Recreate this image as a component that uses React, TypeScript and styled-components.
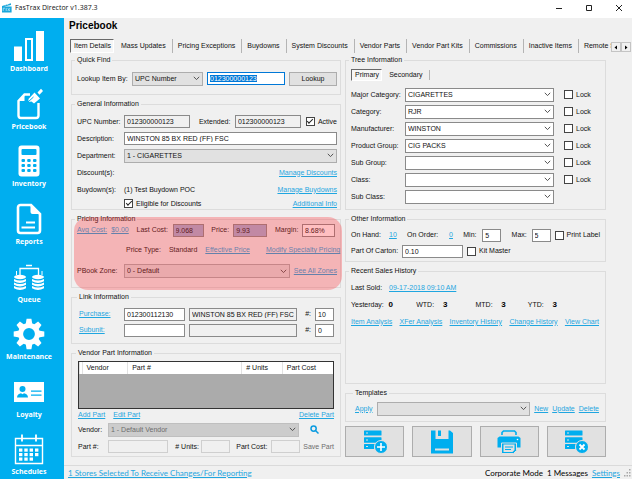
import React, { useEffect, useRef } from "react";
import styled, { createGlobalStyle, css } from "styled-components";

const BLUE = "#00aeef";

const Global = createGlobalStyle`
  *, *::before, *::after { box-sizing: border-box; }
  html, body { margin: 0; padding: 0; }
  body {
    background: #f0f0f0;
    color: #111;
    font: 7px/10px "Liberation Sans", Arial, sans-serif;
  }
  button, input, select { font: inherit; color: inherit; margin: 0; }
`;

const Window = styled.div`
  min-height: 100vh;
  display: flex;
  flex-direction: column;
`;

const TitleBar = styled.header`
  height: 18px;
  flex: none;
  display: flex;
  align-items: center;
  gap: 3px;
  padding: 0 0 2px 2px;
  background: #fff;
  font-family: "Open Sans", "Noto Sans", sans-serif;
`;

const Caption = styled.span`
  flex: 1;
`;

const WindowButton = styled.button`
  width: 27px;
  height: 14px;
  display: grid;
  place-items: center;
  padding: 0;
  border: 0;
  background: none;
`;

const Body = styled.div`
  flex: 1;
  display: flex;
`;

const Sidebar = styled.nav`
  width: 64px;
  flex: none;
  display: flex;
  flex-direction: column;
  background: ${BLUE};
`;

const NavItem = styled.button`
  flex: 1;
  display: flex;
  flex-direction: column;
  align-items: center;
  padding: 12px 6px 0 0;
  border: 0;
  background: none;
  color: #fff;
  font: 700 7px/13px "Open Sans", "Noto Sans", sans-serif;
  svg { display: block; }
`;

const Page = styled.div`
  flex: 1;
  min-width: 0;
  display: flex;
  flex-direction: column;
`;

const PageTitle = styled.h1`
  margin: 0 0 5px;
  padding-left: 5px;
  color: #000;
  font: 700 10px/16px "Liberation Sans", Arial, sans-serif;
`;

const TabStrip = styled.div`
  display: flex;
  align-items: stretch;
  height: 14px;
  margin: 0 0 2px 6px;
  overflow: hidden;
`;

const Tab = styled.button<{ $active?: boolean }>`
  flex: none;
  padding: 0 6px 0 5px;
  border: 0;
  border-right: 1px solid #b4b4b4;
  background: none;
  white-space: nowrap;
  ${(p) =>
    p.$active &&
    css`
      padding: 0 2px 0 3px;
      margin-right: 2px;
      border: 1px solid #fff;
      border-top-color: #696969;
      border-left-color: #696969;
      background: #f6f6f6;
      & + * { border-left: 1px solid #b4b4b4; }
    `}
`;

const TabScroller = styled.div`
  display: flex;
  margin-left: auto;
  padding: 3px 1px 1px 0;
  background: #f0f0f0;
`;

const TabViewport = styled.div`
  flex: 1;
  min-width: 0;
  display: flex;
  overflow: hidden;
  & > :last-child { border-right: 0; padding-right: 0; }
`;

const ScrollButton = styled.button`
  width: 10px;
  padding: 0;
  display: grid;
  place-items: center;
  border: 1px solid #c4c4c4;
  background: #f0f0f0;
`;

const Columns = styled.main`
  flex: 1;
  display: grid;
  grid-template-columns: minmax(0, 270fr) minmax(0, 261fr);
  gap: 4px;
  padding: 0 26px 8px 7px;
`;

const Column = styled.div`
  display: flex;
  flex-direction: column;
  gap: 4px;
`;

const Group = styled.fieldset<{ $pad: string; $grow?: boolean }>`
  position: relative;
  min-width: 0;
  margin: 0;
  padding: ${(p) => p.$pad};
  border: 1px solid #dcdcdc;
  ${(p) => p.$grow && "flex: 1;"}
`;

const Legend = styled.legend`
  margin-left: -2px;
  padding: 0 2px;
  line-height: 10px;
`;

const Highlight = styled.div`
  position: absolute;
  inset: -7px -2px -3px 2px;
  border-radius: 14px;
  background: rgba(255, 50, 55, 0.31);
  pointer-events: none;
`;

const Row = styled.div<{ $h?: number; $gap?: number; $between?: boolean }>`
  display: flex;
  align-items: center;
  height: ${(p) => p.$h ?? 17}px;
  gap: ${(p) => p.$gap ?? 4}px;
  white-space: nowrap;
  ${(p) => p.$between && "justify-content: space-between;"}
`;

const Label = styled.label<{ $w?: number }>`
  flex: none;
  ${(p) => p.$w && `width: ${p.$w}px;`}
`;

const Text = styled.span<{ $w?: number }>`
  flex: none;
  ${(p) => p.$w && `width: ${p.$w}px;`}
`;

const Spring = styled.span`
  flex: 1;
`;

const Link = styled.a`
  flex: none;
  color: #1fa6e0;
  text-decoration: underline;
`;

const Field = styled.input<{ $w?: number; $tone?: "light" | "lilac" }>`
  min-width: 0;
  height: 13px;
  padding: 0 2px;
  border: 1px solid #8a8a8a;
  border-radius: 0;
  background: #fff;
  outline: 0;
  ${(p) => (p.$w ? `flex: none; width: ${p.$w}px;` : "flex: 1;")}
  &:read-only { background: #f0f0f0; }
  &:disabled { border-color: #cfcfcf; background: #f0f0f0; }
  &:focus { border-color: #0078d7; }
  &::selection { background: #0078d7; color: #fff; }
  ${(p) => p.$tone === "lilac" && "&:read-only { background: #a6b1d6; }"}
`;

const SelectBox = styled.span<{ $w?: number }>`
  min-width: 0;
  display: grid;
  align-items: center;
  ${(p) => (p.$w ? `flex: none; width: ${p.$w}px;` : "flex: 1;")}
  svg {
    grid-area: 1 / 1;
    justify-self: end;
    margin-right: 3px;
    pointer-events: none;
  }
`;

const SelectInput = styled.select<{ $white?: boolean }>`
  grid-area: 1 / 1;
  width: 100%;
  height: 14px;
  padding: 0 2px;
  appearance: none;
  border: 1px solid ${(p) => (p.$white ? "#8a8a8a" : "#adadad")};
  border-radius: 0;
  background: ${(p) => (p.$white ? "#fff" : "#e1e1e1")};
  &:disabled {
    border-color: #bfbfbf;
    background: #cccccc;
    color: #6d6d6d;
    opacity: 1;
  }
`;

const CheckLabel = styled.label`
  flex: none;
  display: inline-flex;
  align-items: center;
  gap: 3px;
`;

const CheckBox = styled.input`
  flex: none;
  width: 9px;
  height: 9px;
  display: grid;
  place-items: center;
  appearance: none;
  border: 1px solid #444;
  background: #fff;
  &:checked::before {
    content: "";
    width: 6px;
    height: 3px;
    margin-bottom: 2px;
    border: solid #222;
    border-width: 0 0 1px 1px;
    transform: rotate(-45deg);
  }
`;

const PushButton = styled.button`
  width: 50px;
  height: 14px;
  margin-left: auto;
  padding: 0;
  border: 1px solid #adadad;
  background: #e1e1e1;
`;

const PlainButton = styled.button`
  padding: 0;
  border: 0;
  background: none;
  color: #6d6d6d;
  svg { display: block; }
`;

const GridFrame = styled.div`
  height: 48px;
  border: 1px solid #333;
  background: #ababab;
`;

const PartsTable = styled.table`
  width: 100%;
  table-layout: fixed;
  border-collapse: collapse;
  background: #fff;
  th {
    height: 12px;
    padding: 0 0 0 4px;
    border-left: 1px solid #e2e2e2;
    font-weight: 400;
    text-align: left;
  }
`;

const TreeRow = styled.div`
  display: grid;
  grid-template-columns: 54px minmax(0, 1fr) 38px;
  align-items: center;
  height: 17px;
  padding-right: 10px;
  white-space: nowrap;
  & > :nth-child(3) { margin-left: 10px; }
`;

const Totals = styled.dl`
  display: grid;
  grid-template-columns: 38fr 28fr 27fr 33fr 26fr 27fr 25fr 47fr;
  align-items: center;
  height: 17px;
  margin: 0;
  dd { margin: 0; font-weight: 700; font-size: 8px; color: #000; }
`;

const Actions = styled.div`
  display: flex;
  gap: 8px;
`;

const ActionButton = styled.button`
  flex: 1;
  height: 31px;
  display: grid;
  place-items: center;
  padding: 0;
  border: 1px solid #adadad;
  background: #e1e1e1;
`;

const StatusBar = styled.footer`
  display: flex;
  align-items: center;
  gap: 4px;
  height: 14px;
  padding-left: 4px;
  border-top: 1px solid #dadada;
  color: #000;
  font-family: Lato, "Open Sans", sans-serif;
  font-size: 8px;
`;

/* ---------- drawings ---------- */

const Chevron = () => (
  <svg width="7" height="5" viewBox="0 0 7 5" fill="none" stroke="#555">
    <path d="M.8.8 3.5 3.6 6.2.8" />
  </svg>
);

const AppMark = () => (
  <svg width="10" height="10" viewBox="0 0 10 10" fill="#1aa7dc">
    <path d="M0 3 9 .3v1.6L2 3.4h7.6V9.6H0z" />
    <path d="M2 1.2 3.4 2.6M5 .6l1.2 1.5" stroke="#fff" strokeWidth=".6" />
    <path d="M1.2 5.2H3M1.2 5.2V8M4.2 5v3M5.8 5.2l2 2.8m0-2.8-2 2.8" stroke="#c7ecfa" strokeWidth=".7" fill="none" />
  </svg>
);

const navIcons: Record<string, React.ReactNode> = {
  Dashboard: (
    <>
      <path d="M1 16.5h8V31H1zM23 1h8v30h-8z" />
      <path d="M13 9h6v21h-6z" fill="none" stroke="#fff" strokeWidth="2" />
    </>
  ),
  Pricebook: (
    <>
      <path d="M17 6.5H11.5L5.5 13v14.500a2.500 2.500 0 0 0 2.500 2.500h15a2.500 2.500 0 0 0 2.500-2.500V15" fill="none" stroke="#fff" strokeWidth="2.400" />
      <path d="M5 13 11.500 6v7z" />
      <path d="m15.500 11 6-6.500 5.500 6-6 5-2.500-2-3 .5z" />
      <path d="m15 14 5.500-5" stroke={BLUE} strokeWidth="1" />
      <path d="m24.500 4.500 3.500-3.700 2 2.200-3.500 3.700z" />
    </>
  ),
  Inventory: (
    <>
      <rect x="5.500" y=".5" width="21" height="31" rx="3" />
      <rect x="8.500" y="4" width="15" height="6" rx="1" fill={BLUE} />
      {[14, 19, 24].map((y) =>
        [8.5, 14.2, 20].map((x) => <rect key={`${x}-${y}`} x={x} y={y} width="3.500" height="3" rx="1" fill={BLUE} />)
      )}
    </>
  ),
  Reports: (
    <>
      <path d="M18 2H7.500A2.500 2.500 0 0 0 5 4.500v23A2.500 2.500 0 0 0 7.500 30h17a2.500 2.500 0 0 0 2.500-2.500V11z" fill="none" stroke="#fff" strokeWidth="2.600" />
      <path d="M17.500 1.500V9a2 2 0 0 0 2 2H28z" />
      <path d="M13 19.500h9M8.500 24.500H22" stroke="#fff" strokeWidth="1.800" />
    </>
  ),
  Queue: (
    <>
      <path d="M7 14V7.500h18.500V14M13 4.500h6" fill="none" stroke="#fff" strokeWidth="1.300" />
      <path d="M3.500 10v4M29 10v4" stroke="#fff" />
      {[7, 25].map((x) => (
        <g key={x}>
          <ellipse cx={x} cy="16" rx="6" ry="2.200" />
          {[18.5, 22, 25.500].map((y) => (
            <path key={y} d={`M${x - 6} ${y - 0.500}q6 3.200 12 0v2.200q-6 3.400-12 0z`} />
          ))}
        </g>
      ))}
    </>
  ),
  Maintenance: (
    <g transform="translate(16 16)">
      {[0, 45, 90, 135, 180, 225, 270, 315].map((a) => (
        <path key={a} d="M-3.400-9.500-2.400-15.300h4.800l1 5.800z" transform={`rotate(${a})`} />
      ))}
      <circle r="8.400" fill="none" stroke="#fff" strokeWidth="5" />
    </g>
  ),
  Loyalty: (
    <>
      <rect x="1" y="6" width="30" height="20" />
      <circle cx="9.500" cy="13" r="3" fill={BLUE} />
      <path d="M4 21.500c0-3 2-4 4-4.300l1.500 1 1.500-1c2 .300 4 1.300 4 4.300zM18 14.500h10.500v1.300H18zM18 18.500h10.500v1.300H18z" fill={BLUE} />
    </>
  ),
  Schedules: (
    <>
      <path d="M2.500 5.500h27v25h-27zM2.500 12.500h27" fill="none" stroke="#fff" strokeWidth="1.400" />
      <path d="M9 1.500v7M23 1.500v7" stroke="#fff" strokeWidth="1.800" />
      {[15.500, 20, 24.500].map((y, r) =>
        [6, 11.300, 16.600, 22].map((x, c) =>
          r === 2 && c === 3 ? null : <rect key={`${x}-${y}`} x={x} y={y} width="3.400" height="3.200" />
        )
      )}
    </>
  ),
};

const ServerStack = () => (
  <>
    <path d="M1.500 .5h16.500q.5 0 .5.500v4q0 .5-.5.500H1.500Q1 5.500 1 5V1q0-.5.500-.5zM1.500 7.200h16.500q.5 0 .5.500v3l-6 2H1.500q-.5 0-.5-.5V7.700q0-.5.500-.5zM1.500 14h10.500q-1.500 2-1 5H1.500q-.5 0-.5-.5v-4q0-.5.500-.5z" />
    <path d="M3 3h2M3 10h2M3 16.500h2" stroke="#e1e1e1" />
  </>
);

const actionIcons: [string, React.ReactNode][] = [
  [
    "Add item",
    <>
      <ServerStack />
      <circle cx="18" cy="17" r="6.500" stroke="#e1e1e1" />
      <path d="M18 13v8M14 17h8" stroke="#fff" strokeWidth="1.600" />
    </>,
  ],
  [
    "Save item",
    <>
      <path d="M1 .5h4.500V9h13V.5H20L23 3v20.500H1z" />
      <path d="M8 .5h3V6H8z" />
      <path d="M5 18.500h14v2H5z" fill="#e1e1e1" />
    </>,
  ],
  [
    "Print item",
    <>
      <path d="M5 5V2.500L6.500 1h11L19 2.500V5" fill="none" stroke={BLUE} strokeWidth="1.600" />
      <path d="M2.500 6.500h19L23.500 8v9.500H.5V8z" />
      <path d="M4.500 13h15v7.500l-3 3h-12z" stroke="#e1e1e1" />
      <path d="M6.500 14.500h11v5.500l-2 2h-9z" fill="#e1e1e1" />
      <path d="M8 17h8M8 19.500h6" stroke={BLUE} />
      <circle cx="20.500" cy="9.500" r=".8" fill="#fff" />
    </>,
  ],
  [
    "Delete item",
    <>
      <ServerStack />
      <circle cx="18" cy="17" r="6.500" stroke="#e1e1e1" />
      <path d="m15.500 14.500 5 5m0-5-5 5" stroke="#fff" strokeWidth="1.800" />
    </>,
  ],
];

/* ---------- parts ---------- */

const Select = ({
  id,
  value,
  w,
  white,
  disabled,
  label,
}: {
  id?: string;
  value: string;
  w?: number;
  white?: boolean;
  disabled?: boolean;
  label?: string;
}) => (
  <SelectBox $w={w}>
    <SelectInput id={id} $white={white} disabled={disabled} aria-label={label} defaultValue={value}>
      <option>{value}</option>
    </SelectInput>
    <Chevron />
  </SelectBox>
);

const Check = ({ text, checked }: { text: string; checked?: boolean }) => (
  <CheckLabel>
    <CheckBox type="checkbox" defaultChecked={checked} />
    {text}
  </CheckLabel>
);

const tabs = [
  "Mass Updates",
  "Pricing Exceptions",
  "Buydowns",
  "System Discounts",
  "Vendor Parts",
  "Vendor Part Kits",
  "Commissions",
  "Inactive Items",
  "Remote S",
];

const tree: [string, string, boolean][] = [
  ["Major Category:", "CIGARETTES", true],
  ["Category:", "RJR", true],
  ["Manufacturer:", "WINSTON", true],
  ["Product Group:", "CIG PACKS", true],
  ["Sub Group:", "", true],
  ["Class:", "", true],
  ["Sub Class:", "", false],
];

export default function App() {
  const lookup = useRef<HTMLInputElement>(null);
  useEffect(() => {
    lookup.current?.focus();
    lookup.current?.select();
  }, []);

  return (
    <Window>
      <Global />
      <TitleBar>
        <AppMark />
        <Caption>FasTrax Director v1.387.3</Caption>
        <WindowButton aria-label="Minimize">
          <svg width="8" height="8" viewBox="0 0 8 8" stroke="#222"><path d="M1 4.500h6" /></svg>
        </WindowButton>
        <WindowButton aria-label="Maximize">
          <svg width="8" height="8" viewBox="0 0 8 8" stroke="#222" fill="none"><path d="M1.500 1.500h5v5h-5z" /></svg>
        </WindowButton>
        <WindowButton aria-label="Close">
          <svg width="8" height="8" viewBox="0 0 8 8" stroke="#222"><path d="m1 1 6 6m0-6L1 7" /></svg>
        </WindowButton>
      </TitleBar>
      <Body>
        <Sidebar>
          {Object.entries(navIcons).map(([name, art]) => (
            <NavItem key={name}>
              <svg width="32" height="32" viewBox="0 0 32 32" fill="#fff">{art}</svg>
              {name}
            </NavItem>
          ))}
        </Sidebar>
        <Page>
          <PageTitle>Pricebook</PageTitle>
          <TabStrip>
            <TabViewport>
              <Tab $active>Item Details</Tab>
              {tabs.map((t) => (
                <Tab key={t}>{t}</Tab>
              ))}
            </TabViewport>
            <TabScroller>
              <ScrollButton aria-label="Scroll tabs left">
                <svg width="4" height="5" viewBox="0 0 4 5"><path d="M3 .5v4l-2.500-2z" /></svg>
              </ScrollButton>
              <ScrollButton aria-label="Scroll tabs right">
                <svg width="4" height="5" viewBox="0 0 4 5"><path d="M1 .5v4l2.500-2z" /></svg>
              </ScrollButton>
            </TabScroller>
          </TabStrip>
          <Columns>
            <Column>
              <Group $pad="6px 3px 8px 5px">
                <Legend>Quick Find</Legend>
                <Row $h={15}>
                  <Label $w={51} htmlFor="lookup-by">Lookup Item By:</Label>
                  <Select id="lookup-by" value="UPC Number" w={71} />
                  <Field ref={lookup} $w={78} defaultValue="012300000123" aria-label="Lookup value" />
                  <PushButton>Lookup</PushButton>
                </Row>
              </Group>

              <Group $pad="4px 3px 0 5px">
                <Legend>General Information</Legend>
                <Row $gap={0}>
                  <Label $w={47} htmlFor="upc">UPC Number:</Label>
                  <Field id="upc" $w={66} readOnly value="012300000123" />
                  <Spring />
                  <Label $w={36} htmlFor="ext">Extended:</Label>
                  <Field id="ext" $w={66} readOnly value="012300000123" />
                  <Text $w={5} />
                  <Check text="Active" checked />
                </Row>
                <Row $gap={0}>
                  <Label $w={47} htmlFor="desc">Description:</Label>
                  <Field id="desc" defaultValue="WINSTON 85 BX RED (FF) FSC" />
                </Row>
                <Row $gap={0}>
                  <Label $w={47} htmlFor="dept">Department:</Label>
                  <Select id="dept" value="1 - CIGARETTES" />
                </Row>
                <Row $between>
                  <Text>Discount(s):</Text>
                  <Link href="#discounts">Manage Discounts</Link>
                </Row>
                <Row $gap={0}>
                  <Text $w={47}>Buydown(s):</Text>
                  <Text>(1) Test Buydown POC</Text>
                  <Spring />
                  <Link href="#buydowns">Manage Buydowns</Link>
                </Row>
                <Row $h={11} $gap={0}>
                  <Text $w={47} />
                  <Check text="Eligible for Discounts" checked />
                  <Spring />
                  <Link href="#additional">Additional Info</Link>
                </Row>
              </Group>

              <Group $pad="0 3px 9px 5px">
                <Legend>Pricing Information</Legend>
                <Row $h={12} $gap={0}>
                  <Link href="#avg">Avg Cost:</Link>
                  <Text $w={4} />
                  <Link href="#avg">$0.00</Link>
                  <Spring />
                  <Label $w={36} htmlFor="last">Last Cost:</Label>
                  <Field id="last" $w={31} $tone="lilac" readOnly value="9.068" />
                  <Spring />
                  <Label $w={22} htmlFor="price">Price:</Label>
                  <Field id="price" $w={34} $tone="lilac" readOnly value="9.93" />
                  <Spring />
                  <Label $w={27} htmlFor="margin">Margin:</Label>
                  <Field id="margin" $w={33} defaultValue="8.68%" />
                  <Text $w={2} />
                </Row>
                <Row $h={28} $gap={8}>
                  <Text $w={41} />
                  <Text>Price Type:</Text>
                  <Text>Standard</Text>
                  <Link href="#effective">Effective Price</Link>
                  <Spring />
                  <Link href="#specialty">Modify Specialty Pricing</Link>
                </Row>
                <Row $h={14} $gap={0}>
                  <Label $w={47} htmlFor="zone">PBook Zone:</Label>
                  <Select id="zone" value="0 - Default" />
                  <Text $w={4} />
                  <Link href="#zones">See All Zones</Link>
                </Row>
                <Highlight />
              </Group>

              <Group $pad="4px 6px 5px 7px">
                <Legend>Link Information</Legend>
                {[
                  ["Purchase:", "012300112130", "WINSTON 85 BX RED (FF) FSC CT", "10"],
                  ["Subunit:", "", "", "0"],
                ].map(([name, code, item, qty]) => (
                  <Row key={name} $h={16}>
                    <Text $w={41}><Link href="#link">{name}</Link></Text>
                    <Field $w={61} defaultValue={code} aria-label={`${name} code`} />
                    <Field readOnly value={item} aria-label={`${name} item`} />
                    <Text />
                    <Label htmlFor={`qty-${name}`}>#:</Label>
                    <Field id={`qty-${name}`} $w={19} defaultValue={qty} />
                  </Row>
                ))}
              </Group>

              <Group $pad="3px 6px 1px 6px">
                <Legend>Vendor Part Information</Legend>
                <GridFrame>
                  <PartsTable>
                    <colgroup>
                      <col style={{ width: "1%" }} />
                      <col style={{ width: "18%" }} />
                      <col style={{ width: "45%" }} />
                      <col style={{ width: "16%" }} />
                      <col style={{ width: "20%" }} />
                    </colgroup>
                    <thead>
                      <tr>
                        <th aria-label="Row" />
                        <th>Vendor</th>
                        <th>Part #</th>
                        <th># Units</th>
                        <th>Part Cost</th>
                      </tr>
                    </thead>
                  </PartsTable>
                </GridFrame>
                <Row $h={12} $gap={8}>
                  <Link href="#add">Add Part</Link>
                  <Link href="#edit">Edit Part</Link>
                  <Spring />
                  <Link href="#delete">Delete Part</Link>
                </Row>
                <Row $gap={0}>
                  <Label $w={30} htmlFor="vendor">Vendor:</Label>
                  <Select id="vendor" value="1 - Default Vendor" disabled />
                  <Text $w={11} />
                  <PlainButton aria-label="Search vendors">
                    <svg width="9" height="9" viewBox="0 0 9 9" fill="none" stroke="#0a9be0" strokeWidth="1.500">
                      <circle cx="3.600" cy="3.600" r="2.600" />
                      <path d="m5.500 5.500 3 3" />
                    </svg>
                  </PlainButton>
                  <Text $w={15} />
                </Row>
                <Row $gap={0}>
                  <Label $w={30} htmlFor="part">Part #:</Label>
                  <Field id="part" disabled />
                  <Text $w={7} />
                  <Label $w={26} htmlFor="units"># Units:</Label>
                  <Field id="units" $w={29} disabled />
                  <Text $w={6} />
                  <Label $w={35} htmlFor="cost">Part Cost:</Label>
                  <Field id="cost" $w={29} disabled />
                  <Text $w={3} />
                  <PlainButton>Save Part</PlainButton>
                </Row>
              </Group>
            </Column>

            <Column>
              <Group $pad="3px 3px 4px 5px">
                <Legend>Tree Information</Legend>
                <Row $h={13} $gap={0}>
                  <Tab $active>Primary</Tab>
                  <Tab>Secondary</Tab>
                </Row>
                <Row $h={5} />
                {tree.map(([name, value, lock]) => (
                  <TreeRow key={name}>
                    <Label htmlFor={name}>{name}</Label>
                    <Select id={name} value={value} white />
                    {lock && <Check text="Lock" />}
                  </TreeRow>
                ))}
              </Group>

              <Group $pad="3px 5px 2px 5px">
                <Legend>Other Information</Legend>
                <Row $h={16} $gap={0}>
                  <Text $w={38}>On Hand:</Text>
                  <Link href="#hand">10</Link>
                  <Spring />
                  <Text $w={42}>On Order:</Text>
                  <Link href="#order">0</Link>
                  <Spring />
                  <Label $w={19} htmlFor="min">Min:</Label>
                  <Field id="min" $w={19} defaultValue="5" />
                  <Spring />
                  <Label $w={20} htmlFor="max">Max:</Label>
                  <Field id="max" $w={19} defaultValue="5" />
                  <Text $w={4} />
                  <Check text="Print Label" />
                </Row>
                <Row $h={16} $gap={4}>
                  <Label $w={47} htmlFor="carton">Part Of Carton:</Label>
                  <Field id="carton" $w={61} defaultValue="0.10" />
                  <Check text="Kit Master" />
                </Row>
              </Group>

              <Group $pad="3px 6px 0 5px" $grow>
                <Legend>Recent Sales History</Legend>
                <Row $gap={0}>
                  <Text $w={38}>Last Sold:</Text>
                  <Link href="#sold">09-17-2018 09:10 AM</Link>
                </Row>
                <Totals>
                  <dt>Yesterday:</dt><dd>0</dd>
                  <dt>WTD:</dt><dd>3</dd>
                  <dt>MTD:</dt><dd>3</dd>
                  <dt>YTD:</dt><dd>3</dd>
                </Totals>
                <Row $between>
                  {["Item Analysis", "XFer Analysis", "Inventory History", "Change History", "View Chart"].map((t) => (
                    <Link key={t} href="#report">{t}</Link>
                  ))}
                </Row>
              </Group>

              <Group $pad="2px 6px 4px 9px">
                <Legend>Templates</Legend>
                <Row>
                  <Link href="#apply">Apply</Link>
                  <Select value="" label="Template" />
                  <Link href="#new">New</Link>
                  <Link href="#update">Update</Link>
                  <Link href="#del">Delete</Link>
                </Row>
              </Group>

              <Actions>
                {actionIcons.map(([name, art]) => (
                  <ActionButton key={name} aria-label={name}>
                    <svg width="24" height="24" viewBox="0 0 24 24" fill={BLUE}>{art}</svg>
                  </ActionButton>
                ))}
              </Actions>
            </Column>
          </Columns>
          <StatusBar>
            <Link href="#stores">1 Stores Selected To Receive Changes/For Reporting</Link>
            <Spring />
            <Text>Corporate Mode</Text>
            <Text>1 Messages</Text>
            <Link href="#settings">Settings</Link>
            <svg width="8" height="8" viewBox="0 0 8 8" fill="#a8a8a8">
              <path d="M5 0h1.500v1.500H5zM2.500 3H4v1.500H2.500zM5 3h1.500v1.500H5zM0 6h1.500v1.500H0zM2.500 6H4v1.500H2.500zM5 6h1.500v1.500H5z" />
            </svg>
          </StatusBar>
        </Page>
      </Body>
    </Window>
  );
}
